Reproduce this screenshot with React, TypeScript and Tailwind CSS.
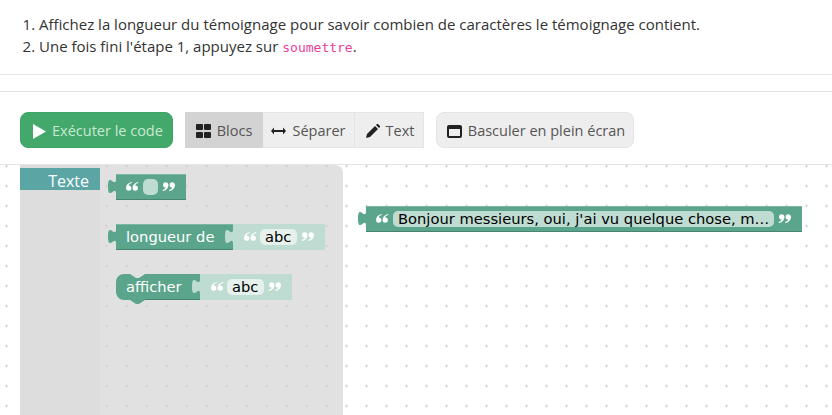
const DARK = "#5ba58c";
const LIGHT = "#bedcd1";
const EDGE = "#478572";
const TOP = "#7cb7a3";
const BLOCK_FONT = "'DejaVu Sans', sans-serif";

// block outline with the puzzle tab on its left edge, y is the block top
function tabPath(x: number, y: number, w: number) {
  return `M${x} ${y}H${x + w}V${y + 26}H${x}V${y + 20}c0 -10 -8 8 -8 -7.500s8 2.500 8 -7.500z`;
}

// quote marks, x/y is the top left of the pair
function Quote({ x, y, open }: { x: number; y: number; open: boolean }) {
  const mark = "M5.500 0C2 .8 0 3.200 0 6.300a2.700 2.700 0 1 0 2.700 -2.900C2.900 2.200 4.200 1.300 6 1z";
  return (
    <g transform={open ? `translate(${x} ${y})` : `translate(${x + 12} ${y + 9}) rotate(180)`} fill="#fff">
      <path d={mark} />
      <path d={mark} transform="translate(6.500 0)" />
    </g>
  );
}

function Socket({ x, y }: { x: number; y: number }) {
  return <path d={`M${x} ${y + 5}V${y + 20}c0 -10 -8 8 -8 -7.500s8 2.500 8 -7.500z`} fill={LIGHT} />;
}

function Edges({ x, y, w }: { x: number; y: number; w: number }) {
  return (
    <>
      <rect x={x} y={y} width={w} height="1" fill={TOP} />
      <rect x={x} y={y + 25} width={w} height="1" fill={EDGE} />
    </>
  );
}

function Blocks() {
  return (
    <svg className="absolute inset-0" width="832" height="250" viewBox="0 165 832 250">
      {/* texte vide */}
      <path d={tabPath(116, 174, 70)} fill={DARK} />
      <Edges x={116} y={174} w={70} />
      <Quote x={126} y={182} open />
      <rect x="143" y="179" width="15" height="16" rx="5" fill={LIGHT} />
      <Quote x={163} y={182} open={false} />

      {/* longueur de */}
      <path d={tabPath(116, 224, 117)} fill={DARK} />
      <Edges x={116} y={224} w={117} />
      <text x="126" y="242" fill="#fff" fontFamily={BLOCK_FONT} fontSize="14.700">longueur de</text>
      <rect x="233" y="224" width="92" height="26" fill={LIGHT} />
      <Socket x={233} y={224} />
      <Quote x={244} y={232} open />
      <rect x="260" y="229" width="37" height="16" rx="5" fill="#e6f1ed" />
      <text x="265" y="242" fill="#000" fontFamily={BLOCK_FONT} fontSize="14.700">abc</text>
      <Quote x={302} y={232} open={false} />

      {/* afficher */}
      <path
        d="M124 274h6l6 4h3l6 -4H200V300H145l-6 4h-3l-6 -4h-6a8 8 0 0 1 -8 -8V282a8 8 0 0 1 8 -8z"
        fill={DARK}
      />
      <rect x="145" y="299" width="55" height="1" fill={EDGE} />
      <text x="126" y="292" fill="#fff" fontFamily={BLOCK_FONT} fontSize="14.700">afficher</text>
      <rect x="200" y="274" width="92" height="26" fill={LIGHT} />
      <Socket x={200} y={274} />
      <Quote x={211} y={282} open />
      <rect x="227" y="279" width="37" height="16" rx="5" fill="#e6f1ed" />
      <text x="232" y="292" fill="#000" fontFamily={BLOCK_FONT} fontSize="14.700">abc</text>
      <Quote x={269} y={282} open={false} />

      {/* temoignage */}
      <path d={tabPath(366, 206, 436)} fill={DARK} />
      <Edges x={366} y={206} w={436} />
      <Quote x={376} y={214} open />
      <rect x="393" y="211" width="381" height="16" rx="5" fill={LIGHT} />
      <text x="398" y="224" fill="#000" fontFamily={BLOCK_FONT} fontSize="14.700">
        Bonjour messieurs, oui, j'ai vu quelque chose, m…
      </text>
      <Quote x={779} y={214} open={false} />
    </svg>
  );
}

export default function App() {
  return (
    <div className="h-[415px] w-[832px] overflow-hidden bg-white font-['Open_Sans',sans-serif] text-[15px] text-[#333]">
      <ol className="h-[75px] list-decimal border-b border-[#e5e5e5] pl-[39px] pt-[13px] leading-[22px]">
        <li>Affichez la longueur du témoignage pour savoir combien de caractères le témoignage contient.</li>
        <li>
          Une fois fini l'étape 1, appuyez sur{" "}
          <code className="font-['DejaVu_Sans_Mono',monospace] text-[13px] text-[#e83e9c]">soumettre</code>.
        </li>
      </ol>

      <div className="mt-4 h-[73px] border-t border-[#e5e5e5] px-5 pt-5">
        <div className="flex h-9 items-stretch text-[14.500px] text-[#555]">
          <button className="flex w-[153px] items-center gap-[6px] rounded-lg border border-[#3fa468] bg-[#42a96b] pl-3 pt-0.5 text-[#c9e8d3]">
            <svg width="13" height="15" viewBox="0 0 13 15" fill="#fff">
              <path d="M0 0L13 7.500L0 15z" />
            </svg>
            Exécuter le code
          </button>
          <div className="ml-3 flex">
            <button className="flex w-[78px] items-center justify-center gap-1.5 border border-[#d3d3d3] bg-[#d3d3d3] pt-0.5">
              <svg width="15" height="14" viewBox="0 0 15 14" fill="#222">
                <rect width="7" height="6" rx="1" />
                <rect x="8" width="7" height="6" rx="1" />
                <rect y="8" width="7" height="6" rx="1" />
                <rect x="8" y="8" width="7" height="6" rx="1" />
              </svg>
              Blocs
            </button>
            <button className="flex w-[92px] items-center justify-center gap-1.5 border-y border-r border-[#e4e4e4] bg-[#eee] pt-0.5">
              <svg width="15" height="8" viewBox="0 0 15 8" fill="#222">
                <path d="M0 4l3 -3.500V3h9V.5L15 4l-3 3.500V5H3v2.500z" />
              </svg>
              Séparer
            </button>
            <button className="flex w-[69px] items-center justify-center gap-1.5 border-y border-r border-[#e4e4e4] bg-[#eee] pl-0.5 pt-0.5">
              <svg width="14" height="14" viewBox="0 0 14 14" fill="#222">
                <path d="M0 14l1 -4 8 -8 3 3 -8 8zM10 1l1 -1a1 1 0 0 1 1 0l2 2a1 1 0 0 1 0 1l-1 1z" />
              </svg>
              Text
            </button>
          </div>
          <button className="ml-3 flex w-[198px] items-center justify-center gap-1.5 rounded-lg border border-[#e4e4e4] bg-[#eee] pl-0.5 pt-0.5">
            <svg width="15" height="13" viewBox="0 0 15 13" fill="none">
              <rect x="1" y="1" width="13" height="11" rx="1" stroke="#222" strokeWidth="2" />
              <rect x="1" y="1" width="13" height="3" fill="#222" />
            </svg>
            Basculer en plein écran
          </button>
        </div>
      </div>

      <div className="relative h-[251px] w-[832px] border-t border-[#e5e5e5]">
        <div className="absolute left-[100px] top-0 h-full w-[243px] rounded-tr-lg bg-[#e1e1e1]" />
        <svg className="absolute inset-0" width="832" height="250">
          <defs>
            <pattern id="grid" width="20" height="20" patternUnits="userSpaceOnUse" x="-4" y="-9">
              <path d="M9 10h3M10.500 8.500v3" stroke="#d2d2d2" strokeWidth="1" />
            </pattern>
          </defs>
          <rect width="832" height="250" fill="url(#grid)" />
        </svg>
        <div className="absolute left-5 top-0 h-full w-20 bg-[#ddd] pt-[3px]">
          <div className="h-[22px] bg-[#5ba5a5] pr-[11px] text-right text-[16px] leading-[26px] text-white">Texte</div>
        </div>
        <Blocks />
      </div>
    </div>
  );
}
